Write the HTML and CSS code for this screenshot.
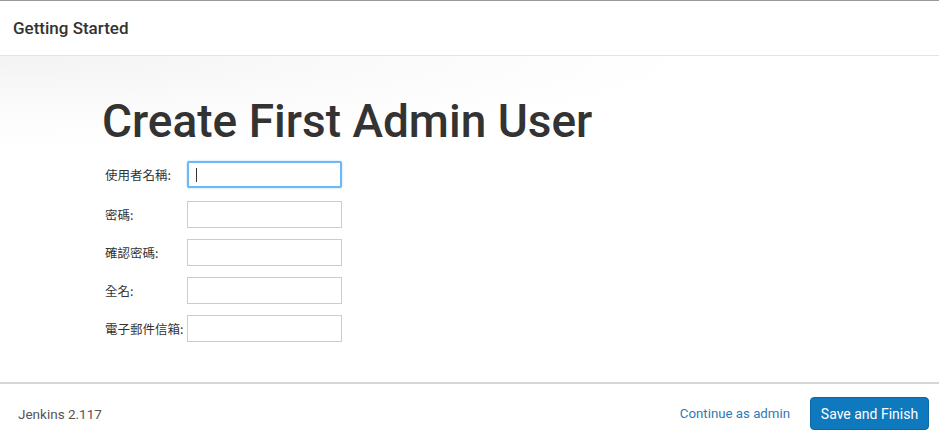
FILE: index.html
```html
<!DOCTYPE html>
<html>
<head>
<meta charset="utf-8">
<link rel="stylesheet" href="styles.css">
</head>
<body>
<div class="dialog">
  <header class="header">Getting Started</header>
  <main class="content">
    <h1 class="title">Create First Admin User</h1>
    <form class="form">
      <div class="row first"><label class="label">使用者名稱:</label><div class="input focus"><span class="caret"></span></div></div>
      <div class="row"><label class="label">密碼:</label><div class="input"></div></div>
      <div class="row"><label class="label">確認密碼:</label><div class="input"></div></div>
      <div class="row"><label class="label">全名:</label><div class="input"></div></div>
      <div class="row"><label class="label">電子郵件信箱:</label><div class="input"></div></div>
    </form>
  </main>
  <footer class="footer">
    <span class="version">Jenkins 2.117</span>
    <span class="spacer"></span>
    <a class="link">Continue as admin</a>
    <button class="btn">Save and Finish</button>
  </footer>
</div>
</body>
</html>
```
FILE: styles.css
```css
html, body { margin: 0; padding: 0; background: #fff; }
body { font-family: Roboto, "Noto Sans CJK TC", sans-serif; color: #333; }
.dialog { width: 939px; height: 443px; border-top: 1px solid #999; box-sizing: border-box; display: flex; flex-direction: column; }
.header { height: 55px; box-sizing: border-box; border-bottom: 1px solid #e3e3e3; padding-left: 13px; display: flex; align-items: center; font-size: 17px; font-weight: 500; color: #333; padding-bottom: 1px; }
.content { flex: 1; background: radial-gradient(ellipse 700px 90px at 0 0, #f3f3f3 0%, #fafafa 50%, #fff 100%); padding: 38px 0 0 102px; box-sizing: border-box; }
.title { margin: 0; font-size: 46px; font-weight: 500; line-height: 54px; color: #333; letter-spacing: 0; }
.form { margin-top: 13px; display: flex; flex-direction: column; gap: 11px; }
.row { display: flex; align-items: center; height: 27px; }
.row.first { margin-bottom: 2px; }
.label { width: 82px; padding-left: 3px; font-family: "Noto Sans CJK TC", sans-serif; font-size: 12.5px; color: #333; }
.input { width: 155px; height: 27px; box-sizing: border-box; border: 1px solid #ccc; background: #fff; position: relative; }
.input.focus { border: 2px solid #6cb9f5; border-radius: 2px; box-shadow: 0 0 2px #9ad0fa; }
.caret { position: absolute; left: 7px; top: 5px; width: 1px; height: 14px; background: #333; }
.footer { height: 61px; box-sizing: border-box; border-top: 2px solid #d6d6d6; display: flex; align-items: center; padding: 0 10px 0 18px; font-size: 13.5px; }
.version { color: #555; }
.spacer { flex: 1; }
.link { color: #2f7ab6; margin-right: 20px; font-size: 13.25px; }
.btn { font-family: Roboto, sans-serif; background: #0f79bd; color: #fff; border: 1px solid #0b6aa6; border-radius: 4px; font-size: 14px; width: 119px; height: 33px; padding: 0; }
```
